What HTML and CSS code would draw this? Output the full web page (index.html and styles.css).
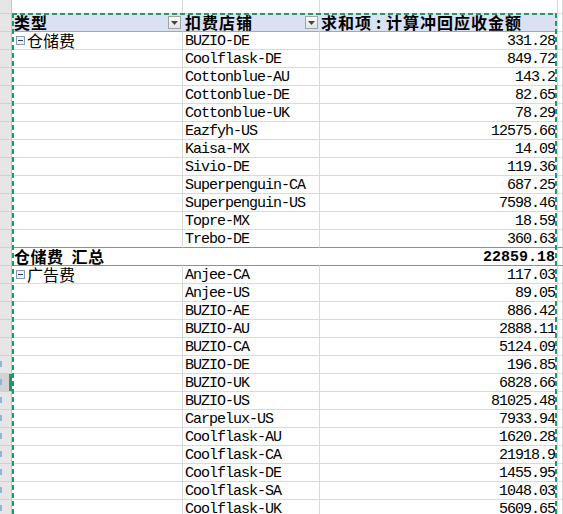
FILE: index.html
```html
<!DOCTYPE html>
<html lang="zh">
<head>
<meta charset="utf-8">
<title>数据透视表</title>
<link rel="stylesheet" href="styles.css">
</head>
<body>
<div class="sheet">
  <div class="row top"><div class="rh"></div><div></div><div></div><div></div><div></div></div>

  <div class="row head">
    <div class="rh"></div>
    <div class="hc hc-a"><span class="ht">类型</span><span class="dd"><svg width="7" height="4" viewBox="0 0 7 4"><path d="M0 0H7L3.5 4Z" fill="#444"/></svg></span></div>
    <div class="hc hc-b"><span class="ht">扣费店铺</span><span class="dd"><svg width="7" height="4" viewBox="0 0 7 4"><path d="M0 0H7L3.5 4Z" fill="#444"/></svg></span></div>
    <div class="hc hc-c"><span class="ht">求和项<span class="colon">:</span>计算冲回应收金额</span></div>
    <div></div>
  </div>

  <div class="row"><div class="rh"></div><div class="cat"><span class="tog"><svg width="9" height="9" viewBox="0 0 9 9"><rect x="0.5" y="0.5" width="8" height="8" fill="#eef2f8" stroke="#8a9ab6"/><path d="M2 4.5H7" stroke="#2f3f60"/></svg></span>仓储费</div><div class="shop">BUZIO-DE</div><div class="num">331.28</div><div></div></div>
  <div class="row"><div class="rh"></div><div></div><div class="shop">Coolflask-DE</div><div class="num">849.72</div><div></div></div>
  <div class="row"><div class="rh"></div><div></div><div class="shop">Cottonblue-AU</div><div class="num">143.2</div><div></div></div>
  <div class="row"><div class="rh"></div><div></div><div class="shop">Cottonblue-DE</div><div class="num">82.65</div><div></div></div>
  <div class="row"><div class="rh"></div><div></div><div class="shop">Cottonblue-UK</div><div class="num">78.29</div><div></div></div>
  <div class="row"><div class="rh"></div><div></div><div class="shop">Eazfyh-US</div><div class="num">12575.66</div><div></div></div>
  <div class="row"><div class="rh"></div><div></div><div class="shop">Kaisa-MX</div><div class="num">14.09</div><div></div></div>
  <div class="row"><div class="rh"></div><div></div><div class="shop">Sivio-DE</div><div class="num">119.36</div><div></div></div>
  <div class="row"><div class="rh"></div><div></div><div class="shop">Superpenguin-CA</div><div class="num">687.25</div><div></div></div>
  <div class="row"><div class="rh"></div><div></div><div class="shop">Superpenguin-US</div><div class="num">7598.46</div><div></div></div>
  <div class="row"><div class="rh"></div><div></div><div class="shop">Topre-MX</div><div class="num">18.59</div><div></div></div>
  <div class="row pre-total"><div class="rh"></div><div></div><div class="shop">Trebo-DE</div><div class="num">360.63</div><div></div></div>

  <div class="row total"><div class="rh"></div><div class="cat tt">仓储费<span class="gap"> </span>汇总</div><div></div><div class="num tn">22859.18</div><div></div></div>

  <div class="row"><div class="rh"></div><div class="cat"><span class="tog"><svg width="9" height="9" viewBox="0 0 9 9"><rect x="0.5" y="0.5" width="8" height="8" fill="#eef2f8" stroke="#8a9ab6"/><path d="M2 4.5H7" stroke="#2f3f60"/></svg></span>广告费</div><div class="shop">Anjee-CA</div><div class="num">117.03</div><div></div></div>
  <div class="row"><div class="rh"></div><div></div><div class="shop">Anjee-US</div><div class="num">89.05</div><div></div></div>
  <div class="row"><div class="rh"></div><div></div><div class="shop">BUZIO-AE</div><div class="num">886.42</div><div></div></div>
  <div class="row"><div class="rh"></div><div></div><div class="shop">BUZIO-AU</div><div class="num">2888.11</div><div></div></div>
  <div class="row"><div class="rh"></div><div></div><div class="shop">BUZIO-CA</div><div class="num">5124.09</div><div></div></div>
  <div class="row"><div class="rh mark"></div><div></div><div class="shop">BUZIO-DE</div><div class="num">196.85</div><div></div></div>
  <div class="row"><div class="rh active mark"></div><div></div><div class="shop">BUZIO-UK</div><div class="num">6828.66</div><div></div></div>
  <div class="row"><div class="rh mark"></div><div></div><div class="shop">BUZIO-US</div><div class="num">81025.48</div><div></div></div>
  <div class="row"><div class="rh mark"></div><div></div><div class="shop">Carpelux-US</div><div class="num">7933.94</div><div></div></div>
  <div class="row"><div class="rh mark"></div><div></div><div class="shop">Coolflask-AU</div><div class="num">1620.28</div><div></div></div>
  <div class="row"><div class="rh mark"></div><div></div><div class="shop">Coolflask-CA</div><div class="num">21918.9</div><div></div></div>
  <div class="row"><div class="rh mark"></div><div></div><div class="shop">Coolflask-DE</div><div class="num">1455.95</div><div></div></div>
  <div class="row"><div class="rh mark"></div><div></div><div class="shop">Coolflask-SA</div><div class="num">1048.03</div><div></div></div>
  <div class="row"><div class="rh mark"></div><div></div><div class="shop">Coolflask-UK</div><div class="num">5609.65</div><div></div></div>
</div>
<div class="marquee"></div>
</body>
</html>
```

FILE: styles.css
```css
* { box-sizing: border-box; }
html, body { margin: 0; padding: 0; }
body {
  width: 563px;
  height: 514px;
  overflow: hidden;
  background: #fff;
  position: relative;
  font-family: "Liberation Mono", monospace;
  color: #000;
}
.sheet { display: flex; flex-direction: column; }
.row {
  display: grid;
  grid-template-columns: 12px 171px 137px 238px 1fr;
  height: 18px;
  flex: none;
}
.row > div {
  border-right: 1px solid #dadada;
  border-bottom: 1px solid #dadada;
  white-space: nowrap;
}
.row > .rh {
  background: #e6e6e6;
  border-right: 1px solid #c4c4c4;
  border-bottom-color: #d0d0d0;
}
.row > .rh.mark {
  background: linear-gradient(#8fb4e0, #8fb4e0) 0 5px / 2px 6px no-repeat, #e6e6e6;
}
.row > .rh.active {
  background:
    linear-gradient(#8fb4e0, #8fb4e0) 0 5px / 2px 6px no-repeat,
    linear-gradient(90deg, #d3d3d3 0 9px, #1d9a67 9px);
  border-right: 1px solid #1d9a67;
}
.row.top { height: 14px; }

/* header */
.row.head > .hc {
  background: #d9e1f2;
  border-bottom: 1px solid #8ea9db;
  display: flex;
  align-items: center;
  justify-content: space-between;
}
.row.head > .hc-a, .row.head > .hc-b { border-right-color: #d9e1f2; }
.hc-a { padding-left: 2px; }
.hc-b { padding-left: 2px; }
.hc-c { padding-left: 1px; }
.ht {
  font-family: "Noto Sans CJK SC", sans-serif;
  font-weight: 700;
  font-size: 16px;
  letter-spacing: 1px;
  line-height: 17px;
  margin-top: -1px;
}
.colon { display: inline-block; width: 14px; text-align: center; }
.dd {
  width: 13px;
  height: 13px;
  margin-right: 1px;
  border: 1px solid #a3a3a3;
  background: linear-gradient(#fafafa, #e4e4e4);
  display: flex;
  align-items: center;
  justify-content: center;
}
.dd svg { display: block; }

/* body cells */
.cat {
  font-family: "Noto Sans CJK SC", sans-serif;
  font-size: 16px;
  line-height: 17px;
  padding-left: 4px;
  display: flex;
  align-items: center;
}
.tog { display: flex; width: 9px; height: 9px; margin-right: 2px; }
.tog svg { display: block; }
.shop, .num {
  font-size: 15px;
  letter-spacing: -1px;
  line-height: 14px;
  padding-top: 3px;
}
.shop { padding-left: 2px; }
.num { text-align: right; padding-right: 2px; }

/* total row */
.row.pre-total > div:not(.rh) { border-bottom-color: #6f93cf; }
.row.total > div:not(.rh) { border-bottom-color: #6f93cf; }
.row.total > .cat, .row.total > div:nth-child(3) { border-right-color: transparent; }
.tt { font-weight: 700; padding-left: 2px; letter-spacing: 0.5px; }
.gap { display: inline-block; width: 8px; }
.tn { font-weight: 700; letter-spacing: 0; }

/* copy marquee */
.marquee {
  position: absolute;
  left: 12px;
  top: 13px;
  width: 545px;
  height: 520px;
  pointer-events: none;
  background:
    repeating-linear-gradient(90deg, #1d9a67 0 5px, transparent 5px 8px) left top / 100% 2px no-repeat,
    repeating-linear-gradient(180deg, #1d9a67 0 5px, transparent 5px 8px) left top / 2px 100% no-repeat,
    repeating-linear-gradient(180deg, #1d9a67 0 5px, transparent 5px 8px) right top / 2px 100% no-repeat;
}
```
